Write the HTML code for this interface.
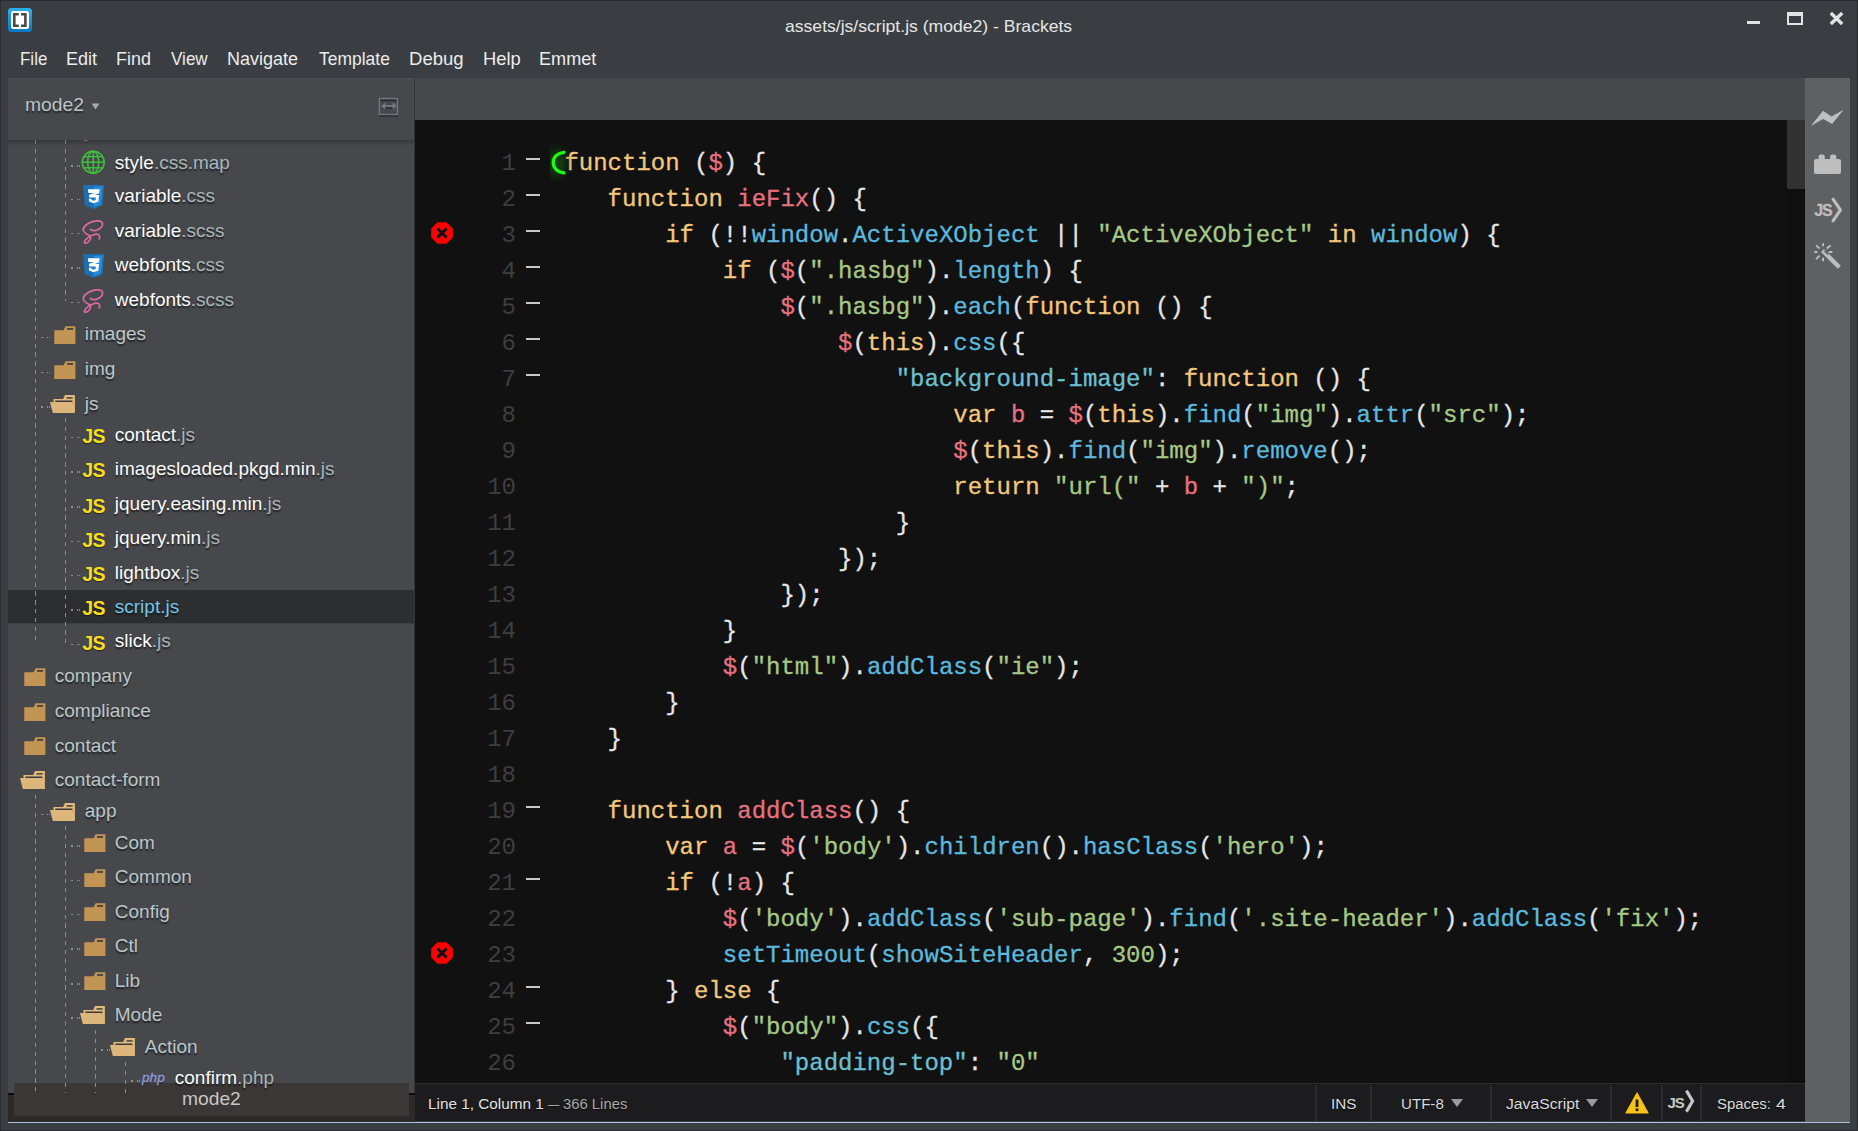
<!DOCTYPE html>
<html><head><meta charset="utf-8">
<style>
*{margin:0;padding:0;box-sizing:border-box}
html,body{width:1858px;height:1131px;overflow:hidden;background:#3a3d41;font-family:"Liberation Sans",sans-serif}
.a{position:absolute}
#frameT{left:0;top:0;width:1858px;height:1px;background:#2a2c2f}
#frameL{left:0;top:0;width:1px;height:1131px;background:#2a2c2f}
#frameR{left:1857px;top:0;width:1px;height:1131px;background:#2a2c2f}
#frameB{left:0;top:1130px;width:1858px;height:1px;background:#2a2c2f}
#title{left:0;top:12px;width:1858px;text-align:center;color:#e4e4e4;font-size:17.5px;line-height:24px;white-space:nowrap}
.menu{top:47px;color:#e8e8e8;font-size:17.5px;line-height:24px;white-space:nowrap}
#sidebar{left:8px;top:78px;width:406px;height:1015px;background:#47484c;overflow:hidden}
#sep{left:414px;top:78px;width:1px;height:1015px;background:#333437}
#tabbar{left:415px;top:78px;width:1390px;height:42px;background:#47484c}
#code{left:415px;top:120px;width:1390px;height:963px;background:#111111;overflow:hidden}
#status{left:415px;top:1083px;width:1390px;height:38px;background:#1c1c1e;border-top:1.5px solid #2e2e2f}
#toolbar{left:1805px;top:78px;width:45px;height:1044px;background:#5f6062}
#blue{left:8px;top:1121.8px;width:1842px;height:1.4px;background:#a9c3e4}
#sbbottom{left:8px;top:1093px;width:407px;height:29px;background:#2b2a29;border-top:2px solid #0c0c0c}
.ln{left:470px;width:46px;text-align:right;font-family:"Liberation Mono",monospace;font-size:24px;line-height:36px;color:#3e3e3e;white-space:pre}
.cl{left:550px;font-family:"Liberation Mono",monospace;font-size:24px;line-height:36px;color:#e6e6e6;white-space:pre;-webkit-text-stroke:0.3px currentColor}
.fm{left:526px;width:14px;height:2.5px;background:#c9c9c9}
.k{color:#f3c87c}.p{color:#e8717f}.s{color:#a6c985}.b{color:#5cb9de}.q{color:#6cc0d1}
.g{color:transparent}
#tree{left:8px;top:140px;width:406px;height:953px;overflow:hidden}
.tn{font-size:19px;line-height:22px;white-space:nowrap;text-shadow:0 1.5px 1.5px rgba(0,0,0,.55)}
.fn{color:#fbfbfb}.ex{color:#a9b6b9}.dn{color:#bcc7c8}.sn{color:#74c6ef}
.jsi{font-family:"Liberation Sans",sans-serif;font-weight:bold;font-size:19.5px;line-height:22px;color:#f6de1c;letter-spacing:-0.6px;text-shadow:0 1px 1px rgba(0,0,20,.5)}
.phpi{font-style:italic;font-size:12.6px;line-height:16px;color:#8c99d2;transform:scaleX(1.08);transform-origin:0 0;-webkit-text-stroke:0.4px #8c99d2;text-shadow:0 1px 1px rgba(0,0,0,.4)}
.vd{width:1.3px;background:repeating-linear-gradient(to bottom,#8c8c8c 0,#8c8c8c 4.3px,transparent 4.3px,transparent 8.85px)}
.hd{width:10px;height:1.6px;background:linear-gradient(to right,#9a9a9a 0,#9a9a9a 1.6px,transparent 1.6px,transparent 5.6px,#9a9a9a 5.6px,#9a9a9a 7px,transparent 7px,transparent 7.6px,#9a9a9a 7.6px,#9a9a9a 9px,transparent 9px);opacity:.85}
.ic{overflow:visible}
.st{font-size:15.5px;line-height:20px;white-space:nowrap}
.ssep{top:1085px;width:1.5px;height:36px;background:#2b2b2d}
.tx{transform-origin:0 0;white-space:nowrap}
</style></head><body>
<div class="a" id="frameT"></div><div class="a" id="frameL"></div><div class="a" id="frameR"></div><div class="a" id="frameB"></div>
<div class="a" id="sidebar"></div>
<div class="a" id="sbbottom"></div>
<!-- sidebar bottom tooltip-like box -->
<div class="a" style="left:14px;top:1083px;width:395px;height:33px;background:#3b3737"></div>
<div class="a" id="tree"><div class="a" style="left:-8px;top:-140px"><div class="a" style="left:8px;top:589.8px;width:407px;height:34.6px;background:#2d2e30;border-bottom:1.4px solid #3d3e41"></div>
<div class="a vd" style="left:34.8px;top:140px;height:503px"></div>
<div class="a vd" style="left:64.8px;top:140px;height:161px"></div>
<div class="a vd" style="left:64.8px;top:418px;height:225px"></div>
<div class="a vd" style="left:34.8px;top:795px;height:298px"></div>
<div class="a vd" style="left:64.8px;top:826px;height:267px"></div>
<div class="a vd" style="left:94.8px;top:1030px;height:63px"></div>
<div class="a vd" style="left:124.8px;top:1062px;height:31px"></div>
<svg class="a ic" style="left:82.2px;top:117.2px" width="22" height="25" viewBox="0 0 22 25" fill="none" stroke="#d86ba5" stroke-width="1.7" stroke-linecap="round"><path d="M8.4 9.5C10 10.6 12 10.9 14 10.4C18 9.4 21 6.5 20.6 3.6C20.2 1.2 17 0.6 14.2 0.9C8 1.6 1.4 5.4 1.2 9.6C1 12.6 5 14.2 7.8 15.8C9.5 17 8.6 20.4 5.8 22.4C3.8 23.8 1.8 23.5 2.6 21.5C3.6 19 7.2 16.6 10.4 15.2C13 14 16 13.6 17.2 15.2C18 16.2 17.8 17.6 17.2 18.9"/></svg>
<div class="a tn fn" style="left:114.8px;top:117.2px">style<span class="ex">.scss</span></div>
<div class="a hd" style="left:71.0px;top:130.5px"></div>
<svg class="a ic" style="left:81.0px;top:150.2px" width="25" height="25" viewBox="0 0 25 25" fill="none" stroke="#3ec43c" stroke-width="1.4"><circle cx="12.2" cy="12.2" r="11"/><ellipse cx="12.2" cy="12.2" rx="5.5" ry="11"/><line x1="12.2" y1="1.2" x2="12.2" y2="23.2"/><line x1="1.2" y1="12.2" x2="23.2" y2="12.2"/><line x1="2.6" y1="6.6" x2="21.8" y2="6.6"/><line x1="2.6" y1="17.8" x2="21.8" y2="17.8"/></svg>
<div class="a tn fn" style="left:114.8px;top:151.8px">style<span class="ex">.css.map</span></div>
<div class="a hd" style="left:71.0px;top:165.1px"></div>
<svg class="a ic" style="left:82.9px;top:184.9px" width="22" height="25" viewBox="0 0 22 25"><path d="M0 0H21.3L19.5 20.3L10.65 24L1.8 20.3Z" fill="#1b6fb5"/><path d="M10.65 1.6H19.6L18 19.2L10.65 22.2Z" fill="#2a8ad6"/><path d="M5 4.3H16.6L16.2 8.2L11.5 10H16L15.4 16.6L10.7 18.3L6 16.6L5.8 13.8H8.6L8.7 15.1L10.7 15.8L12.7 15.1L12.9 12.4H6L6.2 9.8L11 8H5.3Z" fill="#fff"/></svg>
<div class="a tn fn" style="left:114.8px;top:185.2px">variable<span class="ex">.css</span></div>
<div class="a hd" style="left:71.0px;top:198.5px"></div>
<svg class="a ic" style="left:82.2px;top:219.6px" width="22" height="25" viewBox="0 0 22 25" fill="none" stroke="#d86ba5" stroke-width="1.7" stroke-linecap="round"><path d="M8.4 9.5C10 10.6 12 10.9 14 10.4C18 9.4 21 6.5 20.6 3.6C20.2 1.2 17 0.6 14.2 0.9C8 1.6 1.4 5.4 1.2 9.6C1 12.6 5 14.2 7.8 15.8C9.5 17 8.6 20.4 5.8 22.4C3.8 23.8 1.8 23.5 2.6 21.5C3.6 19 7.2 16.6 10.4 15.2C13 14 16 13.6 17.2 15.2C18 16.2 17.8 17.6 17.2 18.9"/></svg>
<div class="a tn fn" style="left:114.8px;top:219.6px">variable<span class="ex">.scss</span></div>
<div class="a hd" style="left:71.0px;top:232.9px"></div>
<svg class="a ic" style="left:82.9px;top:253.7px" width="22" height="25" viewBox="0 0 22 25"><path d="M0 0H21.3L19.5 20.3L10.65 24L1.8 20.3Z" fill="#1b6fb5"/><path d="M10.65 1.6H19.6L18 19.2L10.65 22.2Z" fill="#2a8ad6"/><path d="M5 4.3H16.6L16.2 8.2L11.5 10H16L15.4 16.6L10.7 18.3L6 16.6L5.8 13.8H8.6L8.7 15.1L10.7 15.8L12.7 15.1L12.9 12.4H6L6.2 9.8L11 8H5.3Z" fill="#fff"/></svg>
<div class="a tn fn" style="left:114.8px;top:254.0px">webfonts<span class="ex">.css</span></div>
<div class="a hd" style="left:71.0px;top:267.3px"></div>
<svg class="a ic" style="left:82.2px;top:288.6px" width="22" height="25" viewBox="0 0 22 25" fill="none" stroke="#d86ba5" stroke-width="1.7" stroke-linecap="round"><path d="M8.4 9.5C10 10.6 12 10.9 14 10.4C18 9.4 21 6.5 20.6 3.6C20.2 1.2 17 0.6 14.2 0.9C8 1.6 1.4 5.4 1.2 9.6C1 12.6 5 14.2 7.8 15.8C9.5 17 8.6 20.4 5.8 22.4C3.8 23.8 1.8 23.5 2.6 21.5C3.6 19 7.2 16.6 10.4 15.2C13 14 16 13.6 17.2 15.2C18 16.2 17.8 17.6 17.2 18.9"/></svg>
<div class="a tn fn" style="left:114.8px;top:288.6px">webfonts<span class="ex">.scss</span></div>
<div class="a hd" style="left:71.0px;top:301.9px"></div>
<svg class="a ic" style="left:53.5px;top:325.8px" width="22" height="18" viewBox="0 0 22 18"><path d="M0.3 4.2H9.6L11.6 0.2H21.4V17.9H0.3Z" fill="#c39555"/><rect x="13.1" y="2.1" width="6" height="1.7" fill="#3e3e42"/></svg>
<div class="a tn dn" style="left:84.8px;top:323.4px">images</div>
<div class="a hd" style="left:41.0px;top:336.7px"></div>
<svg class="a ic" style="left:53.5px;top:360.8px" width="22" height="18" viewBox="0 0 22 18"><path d="M0.3 4.2H9.6L11.6 0.2H21.4V17.9H0.3Z" fill="#c39555"/><rect x="13.1" y="2.1" width="6" height="1.7" fill="#3e3e42"/></svg>
<div class="a tn dn" style="left:84.8px;top:358.4px">img</div>
<div class="a hd" style="left:41.0px;top:371.7px"></div>
<svg class="a ic" style="left:50.2px;top:395.0px" width="25" height="19" viewBox="0 0 25 19"><path d="M3.5 3.9H13.1L15 0.1H24.9V18.1H3.5Z" fill="#e0b97b"/><path d="M5.3 5.6H22.4V11L21.6 7.2H5.3Z" fill="#3a3a3d"/><path d="M0 7.1H22.4L24.9 18.1H2.8Z" fill="#dcb67a"/><rect x="16.5" y="2.2" width="6.1" height="1.4" fill="#3e3e42"/></svg>
<div class="a tn dn" style="left:84.8px;top:392.7px">js</div>
<div class="a hd" style="left:41.0px;top:406.0px"></div>
<div class="a jsi" style="left:82.3px;top:425.2px">JS</div>
<div class="a tn fn" style="left:114.8px;top:423.6px">contact<span class="ex">.js</span></div>
<div class="a hd" style="left:71.0px;top:436.9px"></div>
<div class="a jsi" style="left:82.3px;top:459.4px">JS</div>
<div class="a tn fn" style="left:114.8px;top:457.8px">imagesloaded.pkgd.min<span class="ex">.js</span></div>
<div class="a hd" style="left:71.0px;top:471.1px"></div>
<div class="a jsi" style="left:82.3px;top:494.6px">JS</div>
<div class="a tn fn" style="left:114.8px;top:493.0px">jquery.easing.min<span class="ex">.js</span></div>
<div class="a hd" style="left:71.0px;top:506.3px"></div>
<div class="a jsi" style="left:82.3px;top:528.8px">JS</div>
<div class="a tn fn" style="left:114.8px;top:527.2px">jquery.min<span class="ex">.js</span></div>
<div class="a hd" style="left:71.0px;top:540.5px"></div>
<div class="a jsi" style="left:82.3px;top:563.2px">JS</div>
<div class="a tn fn" style="left:114.8px;top:561.6px">lightbox<span class="ex">.js</span></div>
<div class="a hd" style="left:71.0px;top:574.9px"></div>
<div class="a jsi" style="left:82.3px;top:597.4px">JS</div>
<div class="a tn sn" style="left:114.8px;top:595.8px">script.js</div>
<div class="a hd" style="left:71.0px;top:609.1px"></div>
<div class="a jsi" style="left:82.3px;top:631.8px">JS</div>
<div class="a tn fn" style="left:114.8px;top:630.2px">slick<span class="ex">.js</span></div>
<div class="a hd" style="left:71.0px;top:643.5px"></div>
<svg class="a ic" style="left:23.5px;top:667.8px" width="22" height="18" viewBox="0 0 22 18"><path d="M0.3 4.2H9.6L11.6 0.2H21.4V17.9H0.3Z" fill="#c39555"/><rect x="13.1" y="2.1" width="6" height="1.7" fill="#3e3e42"/></svg>
<div class="a tn dn" style="left:54.8px;top:665.4px">company</div>
<svg class="a ic" style="left:23.5px;top:702.6px" width="22" height="18" viewBox="0 0 22 18"><path d="M0.3 4.2H9.6L11.6 0.2H21.4V17.9H0.3Z" fill="#c39555"/><rect x="13.1" y="2.1" width="6" height="1.7" fill="#3e3e42"/></svg>
<div class="a tn dn" style="left:54.8px;top:700.2px">compliance</div>
<svg class="a ic" style="left:23.5px;top:737.0px" width="22" height="18" viewBox="0 0 22 18"><path d="M0.3 4.2H9.6L11.6 0.2H21.4V17.9H0.3Z" fill="#c39555"/><rect x="13.1" y="2.1" width="6" height="1.7" fill="#3e3e42"/></svg>
<div class="a tn dn" style="left:54.8px;top:734.6px">contact</div>
<svg class="a ic" style="left:20.2px;top:771.4px" width="25" height="19" viewBox="0 0 25 19"><path d="M3.5 3.9H13.1L15 0.1H24.9V18.1H3.5Z" fill="#e0b97b"/><path d="M5.3 5.6H22.4V11L21.6 7.2H5.3Z" fill="#3a3a3d"/><path d="M0 7.1H22.4L24.9 18.1H2.8Z" fill="#dcb67a"/><rect x="16.5" y="2.2" width="6.1" height="1.4" fill="#3e3e42"/></svg>
<div class="a tn dn" style="left:54.8px;top:769.1px">contact-form</div>
<svg class="a ic" style="left:50.2px;top:802.6px" width="25" height="19" viewBox="0 0 25 19"><path d="M3.5 3.9H13.1L15 0.1H24.9V18.1H3.5Z" fill="#e0b97b"/><path d="M5.3 5.6H22.4V11L21.6 7.2H5.3Z" fill="#3a3a3d"/><path d="M0 7.1H22.4L24.9 18.1H2.8Z" fill="#dcb67a"/><rect x="16.5" y="2.2" width="6.1" height="1.4" fill="#3e3e42"/></svg>
<div class="a tn dn" style="left:84.8px;top:800.3px">app</div>
<div class="a hd" style="left:41.0px;top:813.6px"></div>
<svg class="a ic" style="left:83.5px;top:834.4px" width="22" height="18" viewBox="0 0 22 18"><path d="M0.3 4.2H9.6L11.6 0.2H21.4V17.9H0.3Z" fill="#c39555"/><rect x="13.1" y="2.1" width="6" height="1.7" fill="#3e3e42"/></svg>
<div class="a tn dn" style="left:114.8px;top:832.0px">Com</div>
<div class="a hd" style="left:71.0px;top:845.3px"></div>
<svg class="a ic" style="left:83.5px;top:868.6px" width="22" height="18" viewBox="0 0 22 18"><path d="M0.3 4.2H9.6L11.6 0.2H21.4V17.9H0.3Z" fill="#c39555"/><rect x="13.1" y="2.1" width="6" height="1.7" fill="#3e3e42"/></svg>
<div class="a tn dn" style="left:114.8px;top:866.2px">Common</div>
<div class="a hd" style="left:71.0px;top:879.5px"></div>
<svg class="a ic" style="left:83.5px;top:903.0px" width="22" height="18" viewBox="0 0 22 18"><path d="M0.3 4.2H9.6L11.6 0.2H21.4V17.9H0.3Z" fill="#c39555"/><rect x="13.1" y="2.1" width="6" height="1.7" fill="#3e3e42"/></svg>
<div class="a tn dn" style="left:114.8px;top:900.6px">Config</div>
<div class="a hd" style="left:71.0px;top:913.9px"></div>
<svg class="a ic" style="left:83.5px;top:937.5px" width="22" height="18" viewBox="0 0 22 18"><path d="M0.3 4.2H9.6L11.6 0.2H21.4V17.9H0.3Z" fill="#c39555"/><rect x="13.1" y="2.1" width="6" height="1.7" fill="#3e3e42"/></svg>
<div class="a tn dn" style="left:114.8px;top:935.1px">Ctl</div>
<div class="a hd" style="left:71.0px;top:948.4px"></div>
<svg class="a ic" style="left:83.5px;top:972.4px" width="22" height="18" viewBox="0 0 22 18"><path d="M0.3 4.2H9.6L11.6 0.2H21.4V17.9H0.3Z" fill="#c39555"/><rect x="13.1" y="2.1" width="6" height="1.7" fill="#3e3e42"/></svg>
<div class="a tn dn" style="left:114.8px;top:970.0px">Lib</div>
<div class="a hd" style="left:71.0px;top:983.3px"></div>
<svg class="a ic" style="left:80.2px;top:1006.3px" width="25" height="19" viewBox="0 0 25 19"><path d="M3.5 3.9H13.1L15 0.1H24.9V18.1H3.5Z" fill="#e0b97b"/><path d="M5.3 5.6H22.4V11L21.6 7.2H5.3Z" fill="#3a3a3d"/><path d="M0 7.1H22.4L24.9 18.1H2.8Z" fill="#dcb67a"/><rect x="16.5" y="2.2" width="6.1" height="1.4" fill="#3e3e42"/></svg>
<div class="a tn dn" style="left:114.8px;top:1004.0px">Mode</div>
<div class="a hd" style="left:71.0px;top:1017.3px"></div>
<svg class="a ic" style="left:110.2px;top:1038.0px" width="25" height="19" viewBox="0 0 25 19"><path d="M3.5 3.9H13.1L15 0.1H24.9V18.1H3.5Z" fill="#e0b97b"/><path d="M5.3 5.6H22.4V11L21.6 7.2H5.3Z" fill="#3a3a3d"/><path d="M0 7.1H22.4L24.9 18.1H2.8Z" fill="#dcb67a"/><rect x="16.5" y="2.2" width="6.1" height="1.4" fill="#3e3e42"/></svg>
<div class="a tn dn" style="left:144.8px;top:1035.7px">Action</div>
<div class="a hd" style="left:101.0px;top:1049.0px"></div>
<div class="a phpi" style="left:142.4px;top:1070.3px">php</div>
<div class="a tn fn" style="left:174.8px;top:1066.7px">confirm<span class="ex">.php</span></div>
<div class="a hd" style="left:131.0px;top:1080.0px"></div></div></div>
<div class="a" id="sep"></div>
<div class="a" id="tabbar"></div>
<div class="a" id="code"></div>
<div class="a ln" style="top:145.6px">1</div>
<div class="a fm" style="top:157.8px"></div>
<div class="a cl" style="top:145.6px"><span class="g">(</span><span class="k">function</span> (<span class="p">$</span>) {</div>
<div class="a ln" style="top:181.6px">2</div>
<div class="a fm" style="top:193.8px"></div>
<div class="a cl" style="top:181.6px">    <span class="k">function</span> <span class="p">ieFix</span>() {</div>
<div class="a ln" style="top:217.6px">3</div>
<div class="a fm" style="top:229.8px"></div>
<div class="a cl" style="top:217.6px">        <span class="k">if</span> (!!<span class="b">window</span>.<span class="b">ActiveXObject</span> || <span class="s">&quot;ActiveXObject&quot;</span> <span class="k">in</span> <span class="b">window</span>) {</div>
<div class="a ln" style="top:253.6px">4</div>
<div class="a fm" style="top:265.8px"></div>
<div class="a cl" style="top:253.6px">            <span class="k">if</span> (<span class="p">$</span>(<span class="s">&quot;.hasbg&quot;</span>).<span class="b">length</span>) {</div>
<div class="a ln" style="top:289.6px">5</div>
<div class="a fm" style="top:301.8px"></div>
<div class="a cl" style="top:289.6px">                <span class="p">$</span>(<span class="s">&quot;.hasbg&quot;</span>).<span class="b">each</span>(<span class="k">function</span> () {</div>
<div class="a ln" style="top:325.6px">6</div>
<div class="a fm" style="top:337.8px"></div>
<div class="a cl" style="top:325.6px">                    <span class="p">$</span>(<span class="k">this</span>).<span class="b">css</span>({</div>
<div class="a ln" style="top:361.6px">7</div>
<div class="a fm" style="top:373.8px"></div>
<div class="a cl" style="top:361.6px">                        <span class="q">&quot;background-image&quot;</span>: <span class="k">function</span> () {</div>
<div class="a ln" style="top:397.6px">8</div>
<div class="a cl" style="top:397.6px">                            <span class="k">var</span> <span class="p">b</span> = <span class="p">$</span>(<span class="k">this</span>).<span class="b">find</span>(<span class="s">&quot;img&quot;</span>).<span class="b">attr</span>(<span class="s">&quot;src&quot;</span>);</div>
<div class="a ln" style="top:433.6px">9</div>
<div class="a cl" style="top:433.6px">                            <span class="p">$</span>(<span class="k">this</span>).<span class="b">find</span>(<span class="s">&quot;img&quot;</span>).<span class="b">remove</span>();</div>
<div class="a ln" style="top:469.6px">10</div>
<div class="a cl" style="top:469.6px">                            <span class="k">return</span> <span class="s">&quot;url(&quot;</span> + <span class="p">b</span> + <span class="s">&quot;)&quot;</span>;</div>
<div class="a ln" style="top:505.6px">11</div>
<div class="a cl" style="top:505.6px">                        }</div>
<div class="a ln" style="top:541.6px">12</div>
<div class="a cl" style="top:541.6px">                    });</div>
<div class="a ln" style="top:577.6px">13</div>
<div class="a cl" style="top:577.6px">                });</div>
<div class="a ln" style="top:613.6px">14</div>
<div class="a cl" style="top:613.6px">            }</div>
<div class="a ln" style="top:649.6px">15</div>
<div class="a cl" style="top:649.6px">            <span class="p">$</span>(<span class="s">&quot;html&quot;</span>).<span class="b">addClass</span>(<span class="s">&quot;ie&quot;</span>);</div>
<div class="a ln" style="top:685.6px">16</div>
<div class="a cl" style="top:685.6px">        }</div>
<div class="a ln" style="top:721.6px">17</div>
<div class="a cl" style="top:721.6px">    }</div>
<div class="a ln" style="top:757.6px">18</div>
<div class="a cl" style="top:757.6px"></div>
<div class="a ln" style="top:793.6px">19</div>
<div class="a fm" style="top:805.8px"></div>
<div class="a cl" style="top:793.6px">    <span class="k">function</span> <span class="p">addClass</span>() {</div>
<div class="a ln" style="top:829.6px">20</div>
<div class="a cl" style="top:829.6px">        <span class="k">var</span> <span class="p">a</span> = <span class="p">$</span>(<span class="s">&#x27;body&#x27;</span>).<span class="b">children</span>().<span class="b">hasClass</span>(<span class="s">&#x27;hero&#x27;</span>);</div>
<div class="a ln" style="top:865.6px">21</div>
<div class="a fm" style="top:877.8px"></div>
<div class="a cl" style="top:865.6px">        <span class="k">if</span> (!<span class="p">a</span>) {</div>
<div class="a ln" style="top:901.6px">22</div>
<div class="a cl" style="top:901.6px">            <span class="p">$</span>(<span class="s">&#x27;body&#x27;</span>).<span class="b">addClass</span>(<span class="s">&#x27;sub-page&#x27;</span>).<span class="b">find</span>(<span class="s">&#x27;.site-header&#x27;</span>).<span class="b">addClass</span>(<span class="s">&#x27;fix&#x27;</span>);</div>
<div class="a ln" style="top:937.6px">23</div>
<div class="a cl" style="top:937.6px">            <span class="b">setTimeout</span>(<span class="b">showSiteHeader</span>, <span class="s">300</span>);</div>
<div class="a ln" style="top:973.6px">24</div>
<div class="a fm" style="top:985.8px"></div>
<div class="a cl" style="top:973.6px">        } <span class="k">else</span> {</div>
<div class="a ln" style="top:1009.6px">25</div>
<div class="a fm" style="top:1021.8px"></div>
<div class="a cl" style="top:1009.6px">            <span class="p">$</span>(<span class="s">&quot;body&quot;</span>).<span class="b">css</span>({</div>
<div class="a ln" style="top:1045.6px">26</div>
<div class="a cl" style="top:1045.6px">                <span class="q">&quot;padding-top&quot;</span>: <span class="s">&quot;0&quot;</span></div>
<div class="a" id="status"></div>
<div class="a" id="toolbar"></div>
<div class="a" id="blue"></div>
<!-- app icon -->
<svg class="a" style="left:8px;top:8px" width="24" height="24" viewBox="0 0 24 24"><defs><linearGradient id="ag" x1="0" y1="0" x2="0" y2="1"><stop offset="0" stop-color="#2ab0ea"/><stop offset="1" stop-color="#0a78c6"/></linearGradient></defs><path d="M2 0H22L24 2V22L22 24H2L0 22V2Z" fill="url(#ag)"/><path d="M4.5 3H19.5L21 4.5V19.5L19.5 21H4.5L3 19.5V4.5Z" fill="#fdfdfd"/><path d="M5 5H10.7V7.4H7.6V16.6H10.7V19H5Z" fill="#4a4a4a"/><path d="M13 5H18.7V19H13V16.6H16.1V7.4H13Z" fill="#4a4a4a"/></svg>
<!-- window buttons -->
<div class="a" style="left:1747px;top:21px;width:13px;height:3px;background:#e2e2e2"></div>
<div class="a" style="left:1787px;top:12px;width:16px;height:13px;border:2.2px solid #e2e2e2;border-top-width:4.2px"></div>
<svg class="a" style="left:1829px;top:12px" width="15" height="13" viewBox="0 0 15 13"><path d="M1.8 1L13.2 12M13.2 1L1.8 12" stroke="#e2e2e2" stroke-width="3.4"/></svg>
<!-- sidebar header -->
<div class="a" style="left:8px;top:140px;width:406px;height:6px;background:linear-gradient(to bottom,rgba(0,0,0,.22),rgba(0,0,0,0))"></div>
<div class="a" style="left:8px;top:78px;width:406px;height:62px;background:#47484c;border-top:1px solid #4e4f53"></div>
<svg class="a" style="left:91px;top:103px" width="9" height="7" viewBox="0 0 9 7"><path d="M0.5 0.5H8.5L4.5 6.5Z" fill="#a3adae"/></svg>
<svg class="a" style="left:378px;top:97px" width="22" height="21" viewBox="0 0 22 21"><rect x="1" y="17.5" width="19" height="2.2" fill="#2a2b2e"/><rect x="1.4" y="1.5" width="18" height="16" fill="#46484b" stroke="#6f797c" stroke-width="1.4"/><rect x="2.1" y="2.6" width="16.6" height="1.6" fill="#2c2d30"/><path d="M3 9L7.4 5.4V8.1H14.6V5.4L19 9L14.6 12.6V9.9H7.4V12.6Z" fill="#6f797c"/><path d="M7.4 10.2H14.6V11.6H7.4Z" fill="#2a2b2e"/></svg>
<!-- scrollbar thumb -->
<div class="a" style="left:1787px;top:120px;width:18px;height:963px;background:#0f0f0f"></div>
<div class="a" style="left:1804px;top:120px;width:1px;height:963px;background:#0a0a0a"></div>
<div class="a" style="left:1787px;top:120px;width:18px;height:69px;background:#323232"></div>
<!-- error icons -->
<svg class="a" style="left:431px;top:222px" width="22" height="22" viewBox="0 0 22 22"><path d="M6.6 0.2H15.4L21.8 6.6V15.4L15.4 21.8H6.6L0.2 15.4V6.6Z" fill="#fd0000"/><path d="M7.2 7.2L14.8 14.8M14.8 7.2L7.2 14.8" stroke="#0d1010" stroke-width="2.9" stroke-linecap="round"/></svg>
<svg class="a" style="left:431px;top:942px" width="22" height="22" viewBox="0 0 22 22"><path d="M6.6 0.2H15.4L21.8 6.6V15.4L15.4 21.8H6.6L0.2 15.4V6.6Z" fill="#fd0000"/><path d="M7.2 7.2L14.8 14.8M14.8 7.2L7.2 14.8" stroke="#0d1010" stroke-width="2.9" stroke-linecap="round"/></svg>
<!-- toolbar icons -->
<svg class="a" style="left:1805px;top:100px" width="45" height="200" viewBox="0 0 45 200" fill="#bebebe"><path d="M5.8 26.1L18.1 10.8L26.5 16.6L38.6 9.7L27.1 24L18.1 18.9Z"/><path d="M9 61.2C9 59.8 9.8 59 11.2 59H13.6V56.6C13.6 55.2 14.4 54.5 15.8 54.5H17.6C19 54.5 19.8 55.2 19.8 56.6V59H25.1V56.6C25.1 55.2 25.9 54.5 27.3 54.5H29.1C30.5 54.5 31.3 55.2 31.3 56.6V59H33.8C35.2 59 36 59.8 36 61.2V71.8C36 73.2 35.2 74 33.8 74H11.2C9.8 74 9 73.2 9 71.8Z"/><text x="9.2" y="116.4" font-family="Liberation Sans" font-weight="bold" font-size="16" letter-spacing="-1.2" stroke="#bebebe" stroke-width="0.3">JS</text><path d="M28 99.2L35.4 110L28 120.8" fill="none" stroke="#bebebe" stroke-width="3.1" stroke-linecap="round" stroke-linejoin="round"/><g stroke="#bebebe" stroke-width="1.9" stroke-linecap="butt"><path d="M18.1 143.2V146.3M18.1 157.8V161.3M9.3 152H12.4M23.9 152H27.4M11 145.4L14.6 148.5M25.6 145.4L21.7 148.5M11 159.1L14.6 155.6"/></g><path d="M17.6 148.2L20.6 145.2L37.4 162L34.4 165Z" transform="translate(-1.6,3.8)" fill="#bebebe"/><path d="M18.8 151.2L19.8 150.2L23.6 154L22.6 155Z" fill="#5f6062"/></svg>
<!-- status bar -->
<div class="a ssep" style="left:1315px"></div>
<div class="a ssep" style="left:1370px"></div>
<div class="a ssep" style="left:1490px"></div>
<div class="a ssep" style="left:1610px"></div>
<div class="a ssep" style="left:1661px"></div>
<div class="a ssep" style="left:1700px"></div>
<svg class="a" style="left:1450px;top:1098px" width="14" height="10" viewBox="0 0 14 10"><path d="M1 1H13L7 9Z" fill="#9a9a9a"/></svg>
<svg class="a" style="left:1585px;top:1098px" width="14" height="10" viewBox="0 0 14 10"><path d="M1 1H13L7 9Z" fill="#9a9a9a"/></svg>
<svg class="a" style="left:1625px;top:1092px" width="24" height="22" viewBox="0 0 24 22"><path d="M12 1L23 21H1Z" fill="#f6c21a" stroke="#f6c21a" stroke-width="1.2" stroke-linejoin="round"/><rect x="10.6" y="7.5" width="2.8" height="7.5" fill="#1c1c1e"/><rect x="10.6" y="16.5" width="2.8" height="2.6" fill="#1c1c1e"/></svg>
<svg class="a" style="left:1666px;top:1088px" width="30" height="27" viewBox="0 0 30 27"><text x="1.6" y="20" font-family="Liberation Sans" font-weight="bold" font-size="15" letter-spacing="-1.1" fill="#c8c8c8">JS</text><path d="M20.4 2.6L26.6 13L20.4 23.6" fill="none" stroke="#c8c8c8" stroke-width="3.1" stroke-linecap="butt" stroke-linejoin="miter"/></svg>

<div class="a" style="left:550px;top:144px;width:22px;height:38px;background:radial-gradient(ellipse 75% 58% at 30% 50%,rgba(30,110,18,.55) 0%,rgba(26,95,16,.42) 40%,rgba(20,70,14,.16) 75%,rgba(0,0,0,0) 100%)"></div>
<svg class="a" style="left:540px;top:140px" width="30" height="40" viewBox="540 140 30 40"><path d="M563.9 152.4C557.4 153.2 553.2 157.2 553.2 162.6C553.2 168 557.4 172.2 563.9 172.8" fill="none" stroke="#1cfb10" stroke-width="3.3" stroke-linecap="round"/></svg>

<div class="a tx" style="left:784.75px;top:16.05px;font-size:16.60px;line-height:21px;color:#e6e6e6;transform:scaleX(1.0592);">assets/js/script.js (mode2) - Brackets</div>
<div class="a tx" style="left:20.20px;top:47.87px;font-size:17.70px;line-height:22px;color:#ececec;transform:scaleX(0.9587);">File</div>
<div class="a tx" style="left:66.31px;top:47.87px;font-size:17.70px;line-height:22px;color:#ececec;transform:scaleX(1.0175);">Edit</div>
<div class="a tx" style="left:116.42px;top:47.87px;font-size:17.70px;line-height:22px;color:#ececec;transform:scaleX(1.0138);">Find</div>
<div class="a tx" style="left:171.11px;top:47.87px;font-size:17.70px;line-height:22px;color:#ececec;transform:scaleX(0.9655);">View</div>
<div class="a tx" style="left:227.41px;top:47.87px;font-size:17.70px;line-height:22px;color:#ececec;transform:scaleX(1.0190);">Navigate</div>
<div class="a tx" style="left:318.61px;top:47.87px;font-size:17.70px;line-height:22px;color:#ececec;transform:scaleX(0.9877);">Template</div>
<div class="a tx" style="left:408.77px;top:47.87px;font-size:17.70px;line-height:22px;color:#ececec;transform:scaleX(1.0492);">Debug</div>
<div class="a tx" style="left:482.68px;top:47.87px;font-size:17.70px;line-height:22px;color:#ececec;transform:scaleX(1.0379);">Help</div>
<div class="a tx" style="left:539.21px;top:47.87px;font-size:17.70px;line-height:22px;color:#ececec;transform:scaleX(1.0225);">Emmet</div>
<div class="a tx" style="left:428.24px;top:1094.16px;font-size:15.40px;line-height:19px;color:#e2e2e2;transform:scaleX(0.9946);text-shadow:0 1px 1px rgba(0,0,0,.6);">Line 1, Column 1</div>
<div class="a tx" style="left:548.20px;top:1094.16px;font-size:15.40px;line-height:19px;color:#a8a8a8;transform:scaleX(0.7338);text-shadow:0 1px 1px rgba(0,0,0,.6);">—</div>
<div class="a tx" style="left:563.44px;top:1094.16px;font-size:15.40px;line-height:19px;color:#a8a8a8;transform:scaleX(0.9637);text-shadow:0 1px 1px rgba(0,0,0,.6);">366 Lines</div>
<div class="a tx" style="left:1330.59px;top:1094.16px;font-size:15.40px;line-height:19px;color:#dadada;transform:scaleX(0.9889);text-shadow:0 1px 1px rgba(0,0,0,.6);">INS</div>
<div class="a tx" style="left:1400.83px;top:1094.16px;font-size:15.40px;line-height:19px;color:#dadada;transform:scaleX(0.9815);text-shadow:0 1px 1px rgba(0,0,0,.6);">UTF-8</div>
<div class="a tx" style="left:1505.66px;top:1094.16px;font-size:15.40px;line-height:19px;color:#dadada;transform:scaleX(1.0205);text-shadow:0 1px 1px rgba(0,0,0,.6);">JavaScript</div>
<div class="a tx" style="left:1716.63px;top:1094.16px;font-size:15.40px;line-height:19px;color:#dadada;transform:scaleX(0.9710);text-shadow:0 1px 1px rgba(0,0,0,.6);">Spaces:</div>
<div class="a tx" style="left:1776.40px;top:1094.16px;font-size:15.40px;line-height:19px;color:#dadada;transform:scaleX(1.1444);text-shadow:0 1px 1px rgba(0,0,0,.6);">4</div>
<div class="a tx" style="left:25.00px;top:92.72px;font-size:19.00px;line-height:24px;color:#b9c4c5;transform:scaleX(1.0150);text-shadow:0 1.5px 1.5px rgba(0,0,0,.5);">mode2</div>
<div class="a tx" style="left:181.70px;top:1086.72px;font-size:19.00px;line-height:24px;color:#c6c6c6;transform:scaleX(1.0115);">mode2</div>
</body></html>
